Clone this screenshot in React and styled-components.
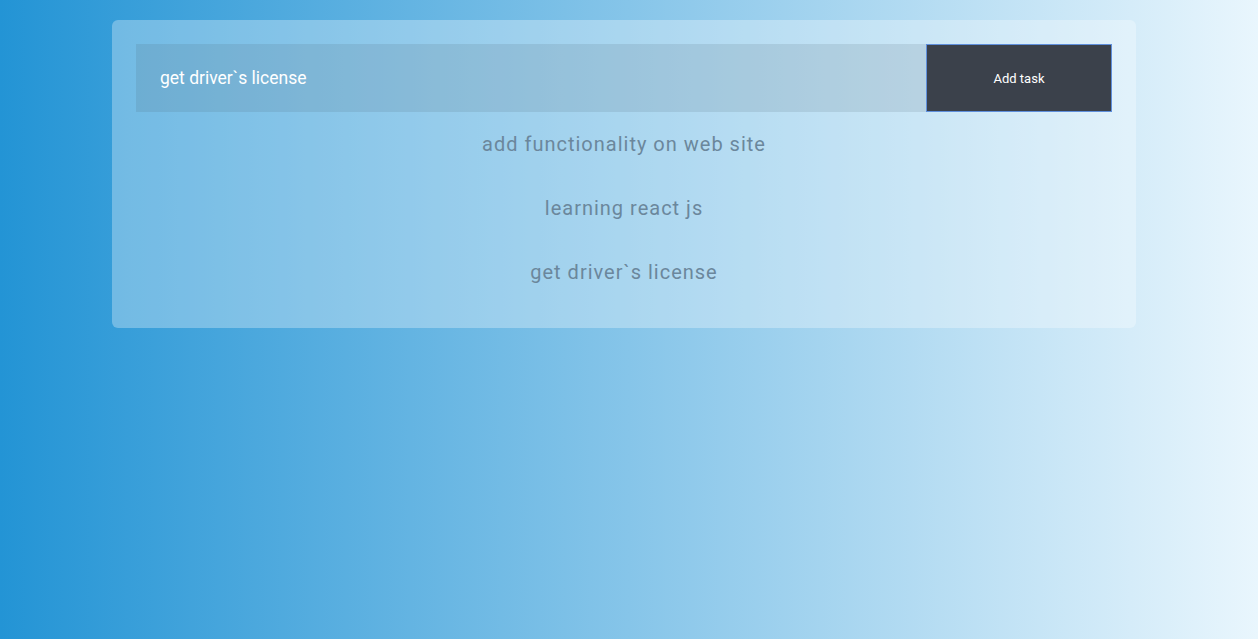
import React from "react";
import styled, { createGlobalStyle } from "styled-components";

const Global = createGlobalStyle`
  html, body { margin: 0; padding: 0; height: 100%; }
  body {
    font-family: Roboto, "Liberation Sans", sans-serif;
    background: linear-gradient(to right, #2394d5 0%, #e9f6fd 100%);
    min-height: 639px;
  }
`;

const Page = styled.div`
  display: flex;
  justify-content: center;
  padding: 20px 10px 0 0;
`;

const Card = styled.div`
  width: 1024px;
  box-sizing: border-box;
  padding: 24px 24px 24px;
  background: rgba(255, 255, 255, 0.3);
  border-radius: 6px;
`;

const Form = styled.form`
  display: flex;
  height: 68px;
`;

const Input = styled.input`
  flex: 1;
  border: none;
  outline: none;
  padding: 0 24px;
  font-family: Roboto, "Liberation Sans", sans-serif;
  font-size: 17.5px;
  color: #ffffff;
  background: rgba(70, 90, 105, 0.14);
`;

const Button = styled.button`
  width: 186px;
  border: 1px solid #5f8fdc;
  background: #3b414b;
  color: #ffffff;
  font-family: Roboto, "Liberation Sans", sans-serif;
  font-size: 13px;
  cursor: pointer;
`;

const List = styled.ul`
  list-style: none;
  margin: 0;
  padding: 0;
  display: flex;
  flex-direction: column;
`;

const Item = styled.li`
  height: 64px;
  display: flex;
  align-items: center;
  justify-content: center;
  font-size: 20px;
  letter-spacing: 1px;
  color: #6b879c;
`;

const tasks = ["add functionality on web site", "learning react js", "get driver`s license"];

export default function App() {
  return (
    <>
      <Global />
      <Page>
        <Card>
          <Form onSubmit={(e) => e.preventDefault()}>
            <Input defaultValue="get driver`s license" />
            <Button type="submit">Add task</Button>
          </Form>
          <List>
            {tasks.map((t) => (
              <Item key={t}>{t}</Item>
            ))}
          </List>
        </Card>
      </Page>
    </>
  );
}
